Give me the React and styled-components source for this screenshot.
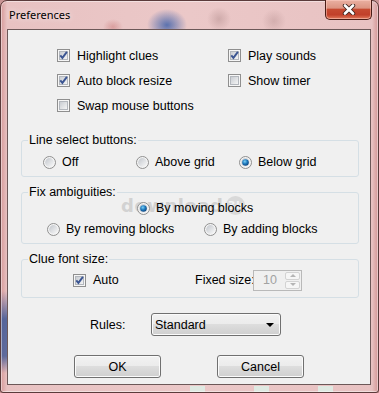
import React from 'react'
import styled, { createGlobalStyle } from 'styled-components'

const GlobalStyle = createGlobalStyle`
  html, body { margin: 0; padding: 0; }
  body {
    width: 379px;
    height: 393px;
    overflow: hidden;
    background: #c99494;
    font-family: "Liberation Sans", Arial, sans-serif;
  }
`

const Frame = styled.div`
  box-sizing: border-box;
  width: 379px;
  height: 393px;
  display: flex;
  flex-direction: column;
  padding: 0 7px 7px 6px;
  border: 1px solid #5b3b3b;
  border-radius: 7px 7px 3px 3px;
  background:
    linear-gradient(to bottom, transparent 290px, rgba(62, 88, 150, 0.85) 318px, rgba(62, 88, 150, 0.8) 355px, transparent 372px) 0 0 / 6px 100% no-repeat,
    linear-gradient(#dfe9e2, #dfe9e2) 189px 385px / 15px 8px no-repeat,
    linear-gradient(#dfe9e2, #dfe9e2) 253px 385px / 15px 8px no-repeat,
    linear-gradient(#dfe9e2, #dfe9e2) 317px 385px / 15px 8px no-repeat,
    radial-gradient(ellipse 20px 16px at 166px 24px, rgba(55, 92, 168, 0.8), rgba(55, 92, 168, 0) 100%),
    radial-gradient(ellipse 12px 12px at 218px 18px, rgba(110, 70, 70, 0.22), transparent),
    radial-gradient(ellipse 12px 12px at 273px 20px, rgba(110, 70, 70, 0.18), transparent),
    radial-gradient(ellipse 10px 8px at 112px 26px, rgba(170, 40, 40, 0.25), transparent),
    linear-gradient(to right, #d69a9a 0, #e8c2c2 6px, #ebc8c8 50%, #e8c2c2 calc(100% - 6px), #d49696 100%);
  box-shadow: inset 0 0 0 1px rgba(255, 255, 255, 0.45);
`

const TitleBar = styled.div`
  height: 28px;
  flex: none;
  display: flex;
  align-items: flex-start;
  justify-content: space-between;
`

const Title = styled.div`
  padding-left: 2px;
  line-height: 28px;
  font-family: "Noto Sans", "Liberation Sans", sans-serif;
  font-size: 11px;
  color: #000;
  text-shadow: 0 0 6px rgba(255, 255, 255, 0.9);
`

const CloseButton = styled.div`
  width: 45px;
  height: 19px;
  margin-top: -1px;
  margin-right: -1px;
  display: flex;
  align-items: center;
  justify-content: center;
  border: 1px solid #4a1d16;
  border-top: none;
  border-radius: 0 0 5px 5px;
  background: linear-gradient(#eab0a2 0%, #dc9482 42%, #c64a31 50%, #c1402a 78%, #e27b5d 100%);
  box-shadow: inset 0 0 0 1px rgba(255, 210, 200, 0.5);
`

const Client = styled.div`
  flex: 1;
  display: flex;
  flex-direction: column;
  background: #f0f0f0;
  border: 1px solid #6c5858;
  color: #000;
  font-size: 12.5px;
`

const Checks = styled.div`
  display: grid;
  grid-template-columns: 171px auto;
  grid-auto-rows: 25px;
  padding: 13px 0 0 49px;
`

const Option = styled.label`
  position: relative;
  display: flex;
  align-items: center;
  gap: ${p => p.$gap || 7}px;
  height: ${p => p.$h || 25}px;
  white-space: nowrap;
`

const Group = styled.fieldset`
  position: relative;
  min-width: 0;
  margin: ${p => p.$top}px 11px 0 13px;
  padding: ${p => p.$pad};
  border: 1px solid #d5dfe5;
  border-radius: 3px;
`

const Legend = styled.legend`
  margin-left: 6px;
  padding: 0 1px;
  font-size: 12.5px;
  line-height: 14px;
`

const Row = styled.div`
  display: grid;
  grid-template-columns: ${p => p.$cols || 'auto'};
  align-items: center;
  height: ${p => p.$h || 18}px;
  margin-top: ${p => p.$top || 0}px;
  padding-left: ${p => p.$left || 0}px;
  white-space: nowrap;
`

const Watermark = styled.div`
  position: absolute;
  top: -4px;
  left: 99px;
  display: flex;
  align-items: center;
  gap: 3px;
  pointer-events: none;
  font-family: "DejaVu Sans", sans-serif;
  font-weight: bold;
  font-size: 18px;
  letter-spacing: 0.5px;
  color: #d2d2d2;
`

const WatermarkBadge = styled.span`
  width: 19px;
  height: 19px;
  border-radius: 50%;
  background: #d9d9d9;
  color: #f3f3f3;
  font-size: 11px;
  display: flex;
  align-items: center;
  justify-content: center;
`

const Spinner = styled.div`
  box-sizing: border-box;
  width: 49px;
  height: 21px;
  display: flex;
  align-items: center;
  justify-content: space-between;
  padding: 0 1px 0 9px;
  border: 1px solid #b9b9b9;
  background: #f0f0f0;
  color: #a2a2a2;
`

const SpinArrows = styled.div`
  display: flex;
  flex-direction: column;
  gap: 1px;
`

const SpinArrow = styled.div`
  box-sizing: border-box;
  width: 15px;
  height: 8px;
  border: 1px solid #d3d3d3;
  border-radius: 2px;
  background: #f6f6f6;
  display: flex;
  align-items: center;
  justify-content: center;
  &::after {
    content: "";
    border-left: 3px solid transparent;
    border-right: 3px solid transparent;
    ${p => (p.$up ? 'border-bottom: 3px solid #b5b5b5;' : 'border-top: 3px solid #b5b5b5;')}
  }
`

const RulesRow = styled.div`
  display: grid;
  grid-template-columns: 61px 130px;
  align-items: center;
  margin-top: 15px;
  padding-left: 82px;
`

const winButton = `
  box-sizing: border-box;
  border: 1px solid #707070;
  border-radius: 3px;
  background: linear-gradient(#f2f2f2 0%, #ebebeb 50%, #dddddd 50%, #cfcfcf 100%);
  box-shadow: inset 0 0 0 1px #fbfbfb;
  font-family: "Liberation Sans", Arial, sans-serif;
  font-size: 12.5px;
  color: #000;
`

const Combo = styled.div`
  ${winButton}
  height: 23px;
  display: flex;
  align-items: center;
  justify-content: space-between;
  padding: 0 6px 0 3px;
  &::after {
    content: "";
    border-left: 4px solid transparent;
    border-right: 4px solid transparent;
    border-top: 4px solid #000;
  }
`

const Buttons = styled.div`
  display: flex;
  justify-content: center;
  gap: 56px;
  margin-top: 19px;
`

const Button = styled.button`
  ${winButton}
  width: 87px;
  height: 23px;
  padding: 0;
`

function CheckBox({ checked }) {
  return (
    <svg width="13" height="13" viewBox="0 0 13 13">
      <defs>
        <linearGradient id="cbFill" x1="0" y1="0" x2="1" y2="1">
          <stop offset="0" stopColor="#c6cad0" />
          <stop offset="1" stopColor="#f7f7f7" />
        </linearGradient>
      </defs>
      <rect x="0.5" y="0.5" width="12" height="12" fill="#f6f6f6" stroke="#8f8f8f" />
      <rect x="2.5" y="2.5" width="8" height="8" fill="url(#cbFill)" stroke="#b3b7bd" />
      {checked && (
        <path d="M3.3 6.4 L5.4 8.9 L9.9 2.9" fill="none" stroke="#3b5592" strokeWidth="1.9" />
      )}
    </svg>
  )
}

function Radio({ checked }) {
  return (
    <svg width="13" height="13" viewBox="0 0 13 13">
      <defs>
        <linearGradient id="rdFill" x1="0" y1="0" x2="1" y2="1">
          <stop offset="0" stopColor="#c2c6cc" />
          <stop offset="1" stopColor="#fafafa" />
        </linearGradient>
        <radialGradient id="rdDot" cx="0.4" cy="0.35" r="0.7">
          <stop offset="0" stopColor="#7fd0f5" />
          <stop offset="0.5" stopColor="#1f7bbf" />
          <stop offset="1" stopColor="#0d3f78" />
        </radialGradient>
      </defs>
      <circle cx="6.5" cy="6.5" r="6" fill="#f4f4f4" stroke="#8f8f8f" />
      <circle cx="6.5" cy="6.5" r="4.4" fill="url(#rdFill)" />
      {checked && <circle cx="6.5" cy="6.5" r="3.3" fill="url(#rdDot)" />}
    </svg>
  )
}

function CloseIcon() {
  return (
    <svg width="14" height="11" viewBox="0 0 14 11">
      <path d="M3 1.5 L11 9.5 M11 1.5 L3 9.5" stroke="#3f2520" strokeWidth="4.4" strokeLinecap="round" />
      <path d="M3 1.5 L11 9.5 M11 1.5 L3 9.5" stroke="#ffffff" strokeWidth="2.6" strokeLinecap="round" />
    </svg>
  )
}

function CheckOption({ label, checked, gap, h }) {
  return (
    <Option $gap={gap} $h={h}>
      <CheckBox checked={checked} />
      {label}
    </Option>
  )
}

function RadioOption({ label, checked }) {
  return (
    <Option $gap={6} $h={18}>
      <Radio checked={checked} />
      {label}
    </Option>
  )
}

export default function App() {
  return (
    <>
      <GlobalStyle />
      <Frame>
        <TitleBar>
          <Title>Preferences</Title>
          <CloseButton>
            <CloseIcon />
          </CloseButton>
        </TitleBar>
        <Client>
          <Checks>
            <CheckOption label="Highlight clues" checked />
            <CheckOption label="Play sounds" checked />
            <CheckOption label="Auto block resize" checked />
            <CheckOption label="Show timer" />
            <CheckOption label="Swap mouse buttons" />
          </Checks>

          <Group $top={15} $pad="6px 0 5px 0">
            <Legend>Line select buttons:</Legend>
            <Row $cols="93px 103px auto" $left={21}>
              <RadioOption label="Off" />
              <RadioOption label="Above grid" />
              <RadioOption label="Below grid" checked />
            </Row>
          </Group>

          <Group $top={8} $pad="0 0 5px 0">
            <Legend>Fix ambiguities:</Legend>
            <Watermark>
              download
              <WatermarkBadge>3k</WatermarkBadge>
            </Watermark>
            <Row $left={115}>
              <RadioOption label="By moving blocks" checked />
            </Row>
            <Row $cols="157px auto" $left={25} $top={3}>
              <RadioOption label="By removing blocks" />
              <RadioOption label="By adding blocks" />
            </Row>
          </Group>

          <Group $top={8} $pad="3px 0 6px 0">
            <Legend>Clue font size:</Legend>
            <Row $cols="122px 58px auto" $h={22} $left={51}>
              <CheckOption label="Auto" checked gap={7} h={22} />
              <span>Fixed size:</span>
              <Spinner>
                10
                <SpinArrows>
                  <SpinArrow $up />
                  <SpinArrow />
                </SpinArrows>
              </Spinner>
            </Row>
          </Group>

          <RulesRow>
            <span>Rules:</span>
            <Combo>Standard</Combo>
          </RulesRow>

          <Buttons>
            <Button>OK</Button>
            <Button>Cancel</Button>
          </Buttons>
        </Client>
      </Frame>
    </>
  )
}
